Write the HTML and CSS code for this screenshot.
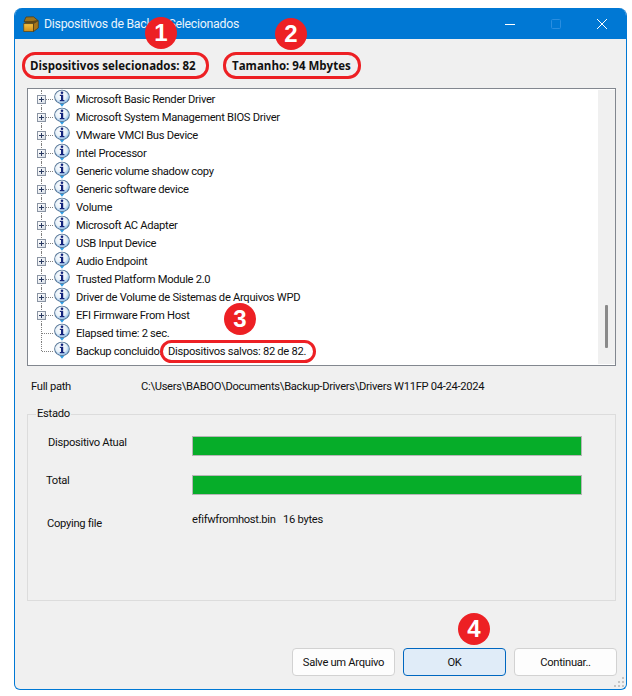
FILE: index.html
```html
<!DOCTYPE html>
<html lang="pt">
<head>
<meta charset="utf-8">
<title>Dispositivos de Backup Selecionados</title>
<link rel="stylesheet" href="styles.css">
</head>
<body>
<svg class="defs" width="0" height="0" aria-hidden="true">
  <defs>
    <radialGradient id="ball" cx="42%" cy="38%" r="68%">
      <stop offset="0" stop-color="#ffffff"/>
      <stop offset="0.6" stop-color="#e6f0f8"/>
      <stop offset="1" stop-color="#7fb6e6"/>
    </radialGradient>
    <linearGradient id="front" x1="0" y1="0" x2="0" y2="1">
      <stop offset="0" stop-color="#f5c445"/>
      <stop offset="1" stop-color="#d08e18"/>
    </linearGradient>
    <symbol id="info" viewBox="0 0 18 18">
      <path d="M6.4 14.5 9 17.8 11.6 14.5Z" fill="#2f9be0"/>
      <ellipse cx="9" cy="7.9" rx="7.8" ry="7.2" fill="#4f6f92"/>
      <ellipse cx="9" cy="7.9" rx="6.9" ry="6.3" fill="url(#ball)"/>
      <circle cx="9" cy="3.7" r="1.3" fill="#14247c"/>
      <path d="M6.8 5.8H10.2V11H11.4V12.3H6.8V11H8V7.1H6.8Z" fill="#14247c"/>
    </symbol>
  </defs>
</svg>
<main class="window">
  <header class="titlebar">
    <svg class="app-icon" width="16" height="16" viewBox="0 0 16 16">
      <path d="M3 1 10.5 .8 15 4.5 8 6 1 5.5Z" fill="#9a7420" stroke="#4a3610" stroke-width=".7"/>
      <path d="M.7 7.6 10.5 7.6 10.5 15.5 .7 15.5Z" fill="url(#front)" stroke="#5a4312" stroke-width=".7"/>
      <path d="M10.5 7.6 15.3 4.6 15.3 12 10.5 15.5Z" fill="#a6751a" stroke="#4a3610" stroke-width=".7"/>
      <path d="M.7 7.6 3 5.5 15 4.6 10.5 7.6Z" fill="#5f4714"/>
    </svg>
    <span class="title">Dispositivos de Backup Selecionados</span>
    <div class="controls">
      <span class="ctl"><svg width="12" height="12" viewBox="0 0 12 12"><path d="M1 6.5H11" stroke="#fff" stroke-width="1"/></svg></span>
      <span class="ctl"><svg width="12" height="12" viewBox="0 0 12 12"><rect x="1.5" y="1.5" width="9" height="9" rx="1" fill="none" stroke="#2a8ee0" stroke-width="1"/></svg></span>
      <span class="ctl"><svg width="12" height="12" viewBox="0 0 12 12"><path d="M1 1 11 11M11 1 1 11" stroke="#fff" stroke-width="1"/></svg></span>
    </div>
  </header>

  <div class="content">
    <div class="summary">
      <span class="pill pill-a"><b>Dispositivos selecionados: 82</b></span>
      <span class="pill pill-b"><b>Tamanho: 94 Mbytes</b></span>
    </div>

    <section class="tree-box">
      <ul class="tree">
        <li class="row"><i class="plus"></i><svg class="info"><use href="#info"/></svg>Microsoft Basic Render Driver</li>
        <li class="row"><i class="plus"></i><svg class="info"><use href="#info"/></svg>Microsoft System Management BIOS Driver</li>
        <li class="row"><i class="plus"></i><svg class="info"><use href="#info"/></svg>VMware VMCI Bus Device</li>
        <li class="row"><i class="plus"></i><svg class="info"><use href="#info"/></svg>Intel Processor</li>
        <li class="row"><i class="plus"></i><svg class="info"><use href="#info"/></svg>Generic volume shadow copy</li>
        <li class="row"><i class="plus"></i><svg class="info"><use href="#info"/></svg>Generic software device</li>
        <li class="row"><i class="plus"></i><svg class="info"><use href="#info"/></svg>Volume</li>
        <li class="row"><i class="plus"></i><svg class="info"><use href="#info"/></svg>Microsoft AC Adapter</li>
        <li class="row"><i class="plus"></i><svg class="info"><use href="#info"/></svg>USB Input Device</li>
        <li class="row"><i class="plus"></i><svg class="info"><use href="#info"/></svg>Audio Endpoint</li>
        <li class="row"><i class="plus"></i><svg class="info"><use href="#info"/></svg>Trusted Platform Module 2.0</li>
        <li class="row"><i class="plus"></i><svg class="info"><use href="#info"/></svg>Driver de Volume de Sistemas de Arquivos WPD</li>
        <li class="row"><i class="plus"></i><svg class="info"><use href="#info"/></svg>EFI Firmware From Host</li>
        <li class="row leaf"><svg class="info"><use href="#info"/></svg>Elapsed time: 2 sec.</li>
        <li class="row leaf last"><svg class="info"><use href="#info"/></svg><span class="done">Backup concluido.</span><span class="pill pill-c">Dispositivos salvos: 82 de 82.</span></li>
      </ul>
      <div class="scrollbar"><span class="thumb"></span></div>
    </section>

    <div class="path-row">
      <span class="path-label">Full path</span>
      <span>C:\Users\BABOO\Documents\Backup-Drivers\Drivers W11FP 04-24-2024</span>
    </div>

    <fieldset class="status">
      <legend>Estado</legend>
      <div class="status-row row-current">
        <span class="lbl lbl-current">Dispositivo Atual</span>
        <div class="bar"></div>
      </div>
      <div class="status-row row-total">
        <span class="lbl lbl-total">Total</span>
        <div class="bar"></div>
      </div>
      <div class="status-row row-file">
        <span class="lbl lbl-file">Copying file</span>
        <span class="file">efifwfromhost.bin&nbsp;&nbsp;&nbsp;16 bytes</span>
      </div>
    </fieldset>

    <footer class="buttons">
      <button class="btn">Salve um Arquivo</button>
      <button class="btn primary">OK</button>
      <button class="btn">Continuar..</button>
    </footer>
  </div>
  <svg class="grip" width="12" height="12" viewBox="0 0 12 12"><g fill="#c4c4c4"><rect x="8" y="0" width="2" height="2"/><rect x="4" y="4" width="2" height="2"/><rect x="8" y="4" width="2" height="2"/><rect x="0" y="8" width="2" height="2"/><rect x="4" y="8" width="2" height="2"/><rect x="8" y="8" width="2" height="2"/></g></svg>
</main>
<span class="badge b1">1</span>
<span class="badge b2">2</span>
<span class="badge b3">3</span>
<span class="badge b4">4</span>
</body>
</html>
```
FILE: styles.css
```css
* { box-sizing: border-box; }
html, body { margin: 0; height: 100%; background: #fff; }
body {
  position: relative;
  width: 632px;
  height: 696px;
  overflow: hidden;
  padding: 8px 6px 6px 14px;
  font-family: Roboto, "Noto Sans", sans-serif;
  font-size: 11.2px;
  letter-spacing: -0.3px;
  color: #111;
}
.defs { position: absolute; }
.window {
  position: relative;
  width: 613px;
  height: 682px;
  background: #f0f0f0;
  border: 1px solid #0078d4;
  border-top: 0;
  border-radius: 8px 8px 6px 6px;
  overflow: hidden;
  display: flex;
  flex-direction: column;
}
.titlebar {
  height: 31px;
  flex: none;
  background: #0078d4;
  color: #eaf4fc;
  display: flex;
  align-items: center;
  padding-left: 8px;
  font-size: 12.3px;
  letter-spacing: -0.25px;
}
.app-icon { margin-right: 5px; flex: none; }
.title { flex: 1; }
.controls { display: flex; margin-right: 1px; }
.ctl { width: 46px; height: 31px; display: flex; align-items: center; justify-content: center; }
.content { padding: 13px 9px 0 12px; flex: 1; display: flex; flex-direction: column; }
.summary { display: flex; gap: 14px; height: 36px; margin-left: -5px; }
.pill {
  border: 3px solid #ed2024;
  border-radius: 13px;
  display: inline-flex;
  align-items: center;
  white-space: nowrap;
}
.pill-a { width: 187px; height: 27px; padding-left: 5px; }
.pill-b { width: 138px; height: 27px; padding-left: 6px; }
.pill b { font-family: "Open Sans", sans-serif; font-weight: 700; font-size: 11.5px; letter-spacing: 0; }
.tree-box {
  height: 278px;
  width: 589px;
  flex: none;
  background: #fff;
  border: 1px solid #82878f;
  display: flex;
  position: relative;
}
.tree { list-style: none; margin: 0; padding: 1px 0 0; flex: 1; overflow: hidden; }
.row {
  height: 18px;
  position: relative;
  display: flex;
  align-items: center;
  padding-left: 48px;
  white-space: nowrap;
}
.row::before {
  content: "";
  position: absolute;
  left: 13px;
  top: 0;
  bottom: 0;
  border-left: 1px dotted #808080;
}
.row::after {
  content: "";
  position: absolute;
  left: 14px;
  width: 11px;
  top: 9px;
  border-top: 1px dotted #808080;
}
.last::before { bottom: 9px; }
.plus {
  position: absolute;
  left: 9px;
  top: 5px;
  width: 9px;
  height: 9px;
  background: linear-gradient(135deg, #fff, #d8dee6);
  border: 1px solid #8a94a3;
  z-index: 1;
}
.plus::before { content: ""; position: absolute; left: 1px; right: 1px; top: 3px; height: 1px; background: #2a3a60; }
.plus::after { content: ""; position: absolute; top: 1px; bottom: 1px; left: 3px; width: 1px; background: #2a3a60; }
.info {
  position: absolute;
  left: 25px;
  top: -1px;
  width: 18px;
  height: 18px;
  z-index: 1;
}
.done { flex: none; }
.pill-c {
  height: 23px;
  width: 156px;
  padding-left: 5px;
  position: absolute;
  left: 132px;
  top: -2px;
  z-index: 1;
  border-radius: 12px;
}
.scrollbar { width: 17px; margin: 1px 0; background: #f0f0f0; position: relative; flex: none; }
.thumb { position: absolute; left: 7px; top: 215px; width: 3px; height: 43px; background: #8a8a8a; border-radius: 1px; }
.path-row { display: flex; height: 41px; padding: 14px 0 0 4px; }
.path-label { width: 110px; }
.status {
  margin: 0;
  width: 589px;
  height: 194px;
  border: 1px solid #dcdcdc;
  padding: 0;
  min-inline-size: 0;
  flex: none;
}
.status legend { padding: 0 1px; margin-left: 8px; line-height: 14px; }
.status-row { position: relative; display: flex; align-items: center; }
.row-current { height: 20px; margin-top: 15px; }
.row-total { height: 20px; margin-top: 19px; }
.row-file { height: 16px; margin-top: 15px; }
.lbl { position: absolute; white-space: nowrap; }
.lbl-current { left: 20px; top: 0; }
.lbl-total { left: 18px; top: -1px; }
.lbl-file { left: 19px; top: 7px; }
.bar {
  margin-left: 164px;
  width: 390px;
  height: 20px;
  background: #06ad29;
  border: 1px solid #b6b6b6;
}
.file { margin-left: 164px; position: relative; top: 1px; }
.buttons { display: flex; justify-content: flex-end; gap: 8px; margin-top: 47px; width: 590px; }
.btn {
  width: 103px;
  height: 28px;
  font: inherit;
  letter-spacing: inherit;
  color: #111;
  padding: 0;
  background: #fdfdfd;
  border: 1px solid #d2d2d2;
  border-radius: 4px;
}
.btn.primary { background: #e0ecf8; border-color: #0067c0; }
.grip { position: absolute; right: 0; bottom: 0; }
.badge {
  position: absolute;
  width: 32px;
  height: 32px;
  border-radius: 50%;
  background: #ed2024;
  color: #fff;
  font-family: "Liberation Sans", sans-serif;
  font-weight: 700;
  font-size: 24px;
  letter-spacing: 0;
  display: flex;
  align-items: center;
  justify-content: center;
}
.b1 { left: 145px; top: 17px; }
.b2 { left: 275px; top: 18px; }
.b3 { left: 224px; top: 303px; }
.b4 { left: 458px; top: 613px; }
```
